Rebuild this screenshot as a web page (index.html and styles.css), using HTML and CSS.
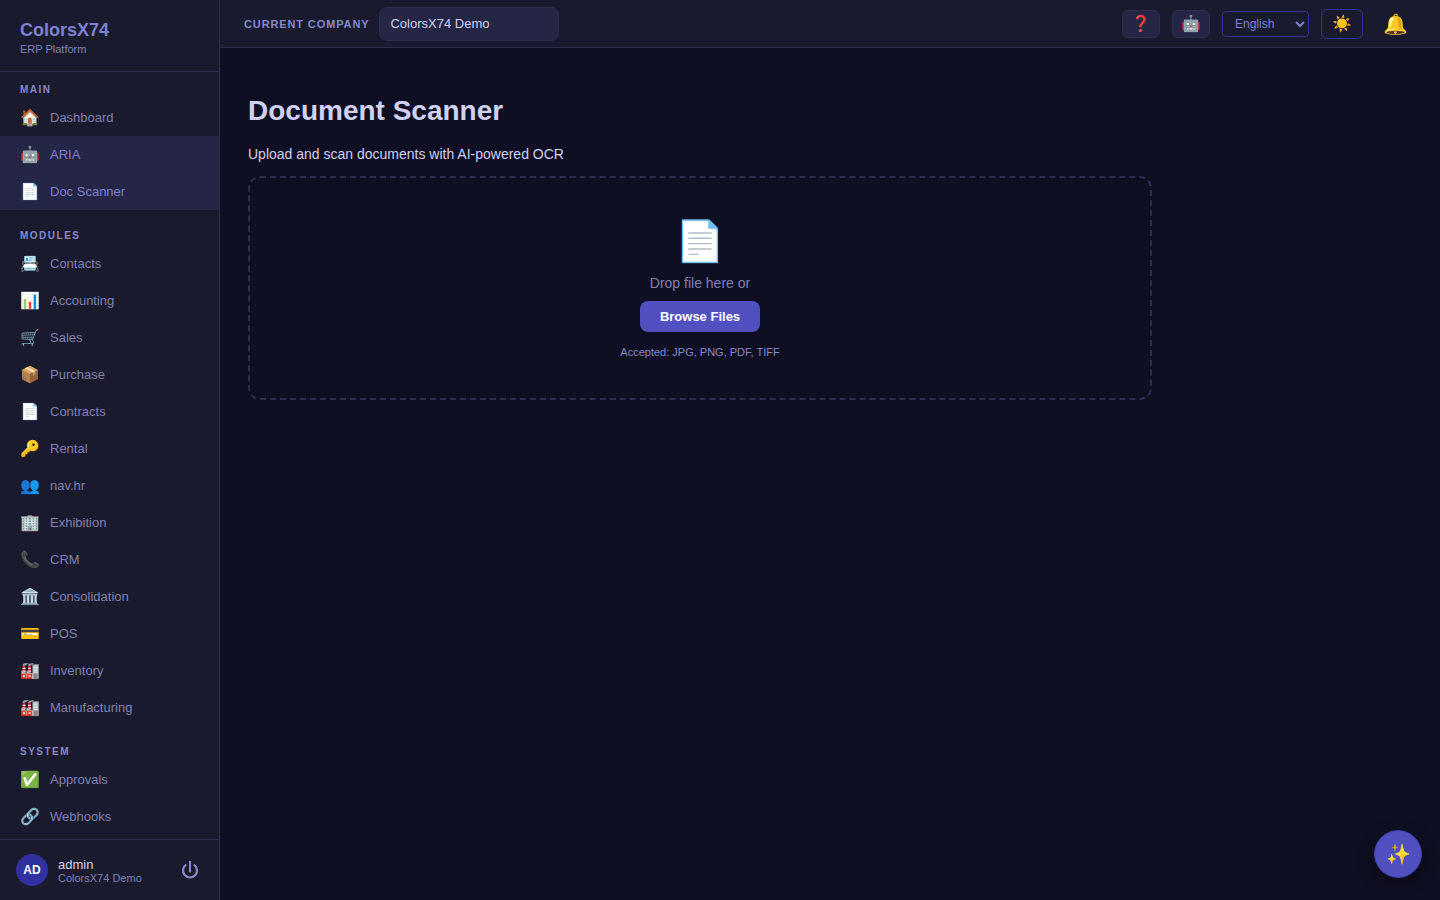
FILE: index.html
```html
<!DOCTYPE html>
<html lang="en">
<head>
  <meta charset="UTF-8">
  <meta name="viewport" content="width=device-width, initial-scale=1">
  <title>Document Scanner - ColorsX74</title>
  <link rel="stylesheet" href="styles.css">
</head>
<body>
  <div class="app">
    <aside class="sidebar">
      <div class="sidebar-header">
        <div class="logo">ColorsX74</div>
        <div class="logo-sub">ERP Platform</div>
      </div>

      <nav class="sidebar-nav">
        <div class="nav-section">
          <div class="nav-label">Main</div>
          <a class="nav-item" href="#"><span class="nav-icon">🏠</span>Dashboard</a>
          <a class="nav-item active" href="#"><span class="nav-icon">🤖</span>ARIA</a>
          <a class="nav-item active" href="#"><span class="nav-icon">📄</span>Doc Scanner</a>
        </div>
        <div class="nav-section">
          <div class="nav-label">Modules</div>
          <a class="nav-item" href="#"><span class="nav-icon">📇</span>Contacts</a>
          <a class="nav-item" href="#"><span class="nav-icon">📊</span>Accounting</a>
          <a class="nav-item" href="#"><span class="nav-icon">🛒</span>Sales</a>
          <a class="nav-item" href="#"><span class="nav-icon">📦</span>Purchase</a>
          <a class="nav-item" href="#"><span class="nav-icon">📄</span>Contracts</a>
          <a class="nav-item" href="#"><span class="nav-icon">🔑</span>Rental</a>
          <a class="nav-item" href="#"><span class="nav-icon">👥</span>nav.hr</a>
          <a class="nav-item" href="#"><span class="nav-icon">🏢</span>Exhibition</a>
          <a class="nav-item" href="#"><span class="nav-icon">📞</span>CRM</a>
          <a class="nav-item" href="#"><span class="nav-icon">🏛️</span>Consolidation</a>
          <a class="nav-item" href="#"><span class="nav-icon">💳</span>POS</a>
          <a class="nav-item" href="#"><span class="nav-icon">🏭</span>Inventory</a>
          <a class="nav-item" href="#"><span class="nav-icon">🏭</span>Manufacturing</a>
        </div>
        <div class="nav-section">
          <div class="nav-label">System</div>
          <a class="nav-item" href="#"><span class="nav-icon">✅</span>Approvals</a>
          <a class="nav-item" href="#"><span class="nav-icon">🔗</span>Webhooks</a>
        </div>
      </nav>

      <div class="sidebar-footer">
        <div class="avatar">AD</div>
        <div class="user-info">
          <div class="user-name">admin</div>
          <div class="user-company">ColorsX74 Demo</div>
        </div>
        <button class="logout-btn" type="button" title="Log out">
          <svg width="18" height="20" viewBox="0 0 18 20" fill="none" stroke="currentColor" stroke-width="2">
            <path d="M9 1v11.500"/>
            <path d="M5.200 4.600a7 7 0 1 0 7.600 0" stroke-width="2.200"/>
          </svg>
        </button>
      </div>
    </aside>

    <div class="main">
      <header class="topbar">
        <label class="company-label" for="company">Current company</label>
        <select class="company-select" id="company">
          <option>ColorsX74 Demo</option>
        </select>
        <div class="topbar-actions">
          <button class="icon-btn" type="button" title="Help">❓</button>
          <button class="icon-btn" type="button" title="ARIA">🤖</button>
          <select class="lang-select" aria-label="Language">
            <option>English</option>
            <option>Português</option>
          </select>
          <button class="theme-btn" type="button" title="Theme">☀️</button>
          <button class="bell-btn" type="button" title="Notifications">🔔</button>
        </div>
      </header>

      <main class="content">
        <h1>Document Scanner</h1>
        <p class="intro">Upload and scan documents with AI-powered OCR</p>
        <div class="drop-zone">
          <div class="drop-icon">📄</div>
          <p class="drop-text">Drop file here or</p>
          <button class="browse-btn" type="button">Browse Files</button>
          <p class="drop-hint">Accepted: JPG, PNG, PDF, TIFF</p>
        </div>
      </main>
    </div>
  </div>

  <button class="fab" type="button" title="Assistant">✨</button>
</body>
</html>
```

FILE: styles.css
```css
* {
  box-sizing: border-box;
  margin: 0;
  padding: 0;
}
body {
  font-family: "Liberation Sans", Arial, sans-serif;
  font-size: 14px;
  background: #0f0f23;
  color: #d0d0f0;
}
button, select {
  font-family: inherit;
  cursor: pointer;
}
.app {
  display: flex;
  height: 100vh;
}

/* Sidebar */
.sidebar {
  width: 220px;
  flex-shrink: 0;
  display: flex;
  flex-direction: column;
  background: #1a1a2e;
  border-right: 1px solid #2d2d50;
}
.sidebar-header {
  padding: 20px 20px 15px;
  border-bottom: 1px solid #2d2d50;
}
.logo {
  font-size: 18px;
  line-height: 20px;
  font-weight: bold;
  color: #8080d0;
}
.logo-sub {
  margin-top: 3px;
  font-size: 11px;
  line-height: 13px;
  color: #8080b8;
}
.sidebar-nav {
  flex: 1;
  min-height: 0;
  overflow: hidden;
}
.nav-section {
  margin-bottom: 8px;
}
.nav-label {
  padding: 12px 20px 4px;
  font-size: 10px;
  line-height: 11px;
  font-weight: bold;
  letter-spacing: 0.15em;
  text-transform: uppercase;
  color: #8888c8;
}
.nav-item {
  display: flex;
  align-items: center;
  gap: 10px;
  height: 37px;
  padding: 0 20px;
  font-size: 13px;
  color: #8080b0;
  text-decoration: none;
}
.nav-item.active {
  background: #252545;
  color: #8080d0;
}
.nav-icon {
  width: 20px;
  font-size: 16px;
  text-align: center;
}
.sidebar-footer {
  display: flex;
  align-items: center;
  gap: 10px;
  padding: 14px 16px;
  border-top: 1px solid #2d2d50;
}
.avatar {
  display: flex;
  align-items: center;
  justify-content: center;
  width: 32px;
  height: 32px;
  border-radius: 50%;
  background: #3030a0;
  color: #fff;
  font-size: 12px;
  font-weight: bold;
}
.user-info {
  flex: 1;
}
.user-name {
  font-size: 13px;
  line-height: 15px;
}
.user-company {
  font-size: 11px;
  line-height: 12px;
  color: #8080b0;
}
.logout-btn {
  display: flex;
  padding: 4px;
  border: none;
  background: none;
  color: #8888c8;
}

/* Top bar */
.main {
  flex: 1;
  min-width: 0;
  display: flex;
  flex-direction: column;
}
.topbar {
  display: flex;
  align-items: center;
  height: 48px;
  padding: 0 24px;
  gap: 10px;
  background: #1a1a2e;
  border-bottom: 1px solid #2d2d50;
}
.company-label {
  font-size: 11px;
  font-weight: bold;
  letter-spacing: 0.08em;
  text-transform: uppercase;
  color: #8888c8;
}
.company-select {
  appearance: none;
  width: 180px;
  height: 34px;
  padding: 0 10px;
  border: 1px solid #2d2d50;
  border-radius: 8px;
  background: #252545;
  color: #d0d0f0;
  font-size: 13px;
}
.topbar-actions {
  display: flex;
  align-items: center;
  gap: 12px;
  margin-left: auto;
}
.icon-btn {
  width: 38px;
  height: 28px;
  border: 1px solid #2d2d50;
  border-radius: 6px;
  background: #252545;
  font-size: 16px;
}
.lang-select {
  width: 87px;
  height: 26px;
  padding: 0 8px;
  border: 1px solid #3030a0;
  border-radius: 4px;
  background: #1a1a2e;
  color: #8080d0;
  font-size: 12px;
}
.theme-btn {
  width: 42px;
  height: 30px;
  border: 1px solid #3030a0;
  border-radius: 6px;
  background: none;
  font-size: 16px;
}
.bell-btn {
  padding: 4px 8px;
  border: none;
  background: none;
  font-size: 20px;
}

/* Scanner page */
.content {
  flex: 1;
  max-width: 960px;
  padding: 47px 28px 28px;
}
.content h1 {
  font-size: 28px;
  line-height: 32px;
}
.intro {
  margin: 19px 0 14px;
  line-height: 16px;
}
.drop-zone {
  padding: 37px 40px 39px;
  border: 2px dashed #2d2d50;
  border-radius: 12px;
  text-align: center;
}
.drop-icon {
  font-size: 40px;
  line-height: 52px;
}
.drop-text {
  margin: 8px 0 10px;
  line-height: 16px;
  color: #8080b0;
}
.browse-btn {
  padding: 8px 20px;
  border: none;
  border-radius: 8px;
  background: #5050c0;
  color: #fff;
  font-size: 13px;
  font-weight: bold;
}
.drop-hint {
  margin-top: 14px;
  font-size: 11px;
  line-height: 13px;
  color: #8888c8;
}

.fab {
  position: fixed;
  right: 18px;
  bottom: 22px;
  width: 48px;
  height: 48px;
  border: 1px solid #3c3ca8;
  border-radius: 50%;
  background: #5050c0;
  box-shadow: 0 4px 16px rgba(0, 0, 0, 0.4);
  font-size: 20px;
}
```
